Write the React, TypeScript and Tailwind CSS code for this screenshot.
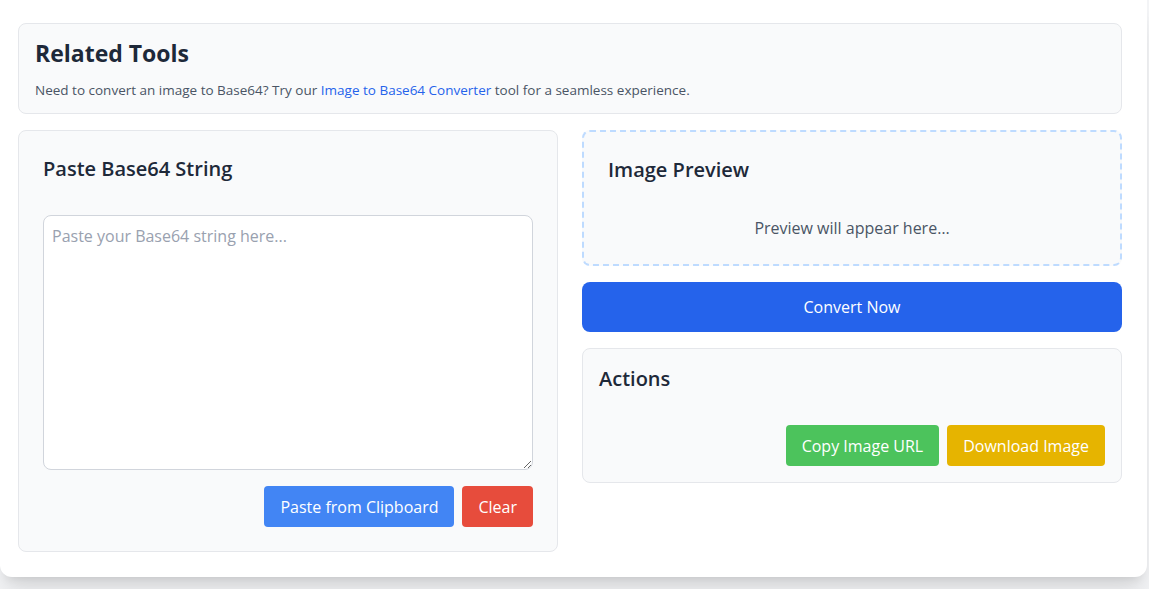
import { useState } from "react";

export default function App() {
  const [value, setValue] = useState("");

  return (
    <div
      className="w-full h-screen overflow-hidden bg-gray-100"
      style={{ fontFamily: "'Open Sans', 'Noto Sans', sans-serif" }}
    >
      <div className="w-[1147px] bg-white rounded-b-xl shadow-xl pl-[18px] pr-[25px] pt-[23px] pb-[25px]">
        {/* Related tools */}
        <div className="bg-gray-50 border border-gray-200 rounded-lg px-4 pt-[14px] pb-[13px]">
          <h2 className="text-[23px] font-bold text-gray-800 leading-[30px]">Related Tools</h2>
          <p className="mt-[12px] text-[13.5px] text-gray-600 leading-5">
            Need to convert an image to Base64? Try our{" "}
            <a href="#" className="text-[#2563eb] font-medium">
              Image to Base64 Converter
            </a>{" "}
            tool for a seamless experience.
          </p>
        </div>

        <div className="grid grid-cols-2 gap-6 mt-4">
          {/* Left */}
          <div className="bg-gray-50 border border-gray-200 rounded-lg p-6">
            <h3 className="text-xl font-semibold text-gray-800 leading-7">Paste Base64 String</h3>
            <textarea
              value={value}
              onChange={(e) => setValue(e.target.value)}
              placeholder="Paste your Base64 string here..."
              className="mt-8 block w-full h-[255px] bg-white border border-gray-300 rounded-lg px-2 py-2 text-base text-gray-700 placeholder:text-gray-400 focus:outline-none"
            />
            <div className="flex justify-end gap-2 mt-4">
              <button className="h-[41px] px-4 rounded bg-[#4285f4] text-white text-base">
                Paste from Clipboard
              </button>
              <button
                onClick={() => setValue("")}
                className="h-[41px] px-4 rounded bg-[#e74c3c] text-white text-base"
              >
                Clear
              </button>
            </div>
          </div>

          {/* Right */}
          <div className="flex flex-col gap-4">
            <div className="bg-gray-50 border-2 border-dashed border-blue-200 rounded-lg p-6">
              <h3 className="text-xl font-semibold text-gray-800 leading-7">Image Preview</h3>
              <p className="mt-8 text-center text-base text-gray-600 leading-6">
                Preview will appear here…
              </p>
            </div>

            <button className="h-[50px] rounded-lg bg-[#2563eb] text-white text-base">
              Convert Now
            </button>

            <div className="bg-gray-50 border border-gray-200 rounded-lg p-4">
              <h3 className="text-xl font-semibold text-gray-800 leading-7">Actions</h3>
              <div className="flex justify-end gap-2 mt-8">
                <button className="h-[41px] px-4 rounded bg-[#4cc35c] text-white text-base">
                  Copy Image URL
                </button>
                <button className="h-[41px] px-4 rounded bg-[#e6b400] text-white text-base">
                  Download Image
                </button>
              </div>
            </div>
          </div>
        </div>
      </div>
    </div>
  );
}
